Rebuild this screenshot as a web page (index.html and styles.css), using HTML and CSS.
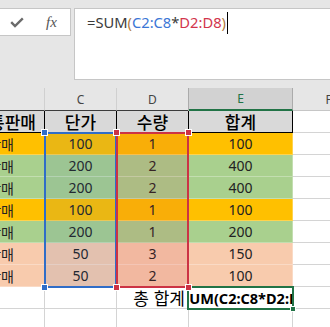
FILE: index.html
```html
<!DOCTYPE html>
<html lang="ko">
<head>
  <meta charset="UTF-8">
  <meta name="viewport" content="width=device-width, initial-scale=1.0">
  <title>총 합계</title>
  <link rel="stylesheet" href="styles.css">
</head>
<body>
  <div class="formula-bar">
    <div class="fx-box">
      <svg class="check" width="14" height="11" viewBox="0 0 14 11">
        <polyline points="1.2,5.2 5,9 12.8,1.4" fill="none" stroke="#6b6b6b" stroke-width="2.4"/>
      </svg>
      <span class="fx">fx</span>
    </div>
    <div class="formula-input">
      <span>=SUM</span><span class="paren">(</span><span class="ref-c">C2:C8</span><span>*</span><span class="ref-d">D2:D8</span><span class="paren">)</span><span class="caret"></span>
    </div>
  </div>

  <div class="sheet">
    <!-- column letters -->
    <div class="col-head"></div>
    <div class="col-head">C</div>
    <div class="col-head">D</div>
    <div class="col-head selected">E</div>
    <div class="col-head last">F</div>

    <!-- table header -->
    <div class="row head">
      <div class="name">유통판매</div>
      <div>단가</div>
      <div>수량</div>
      <div>합계</div>
      <div></div>
    </div>

    <div class="row gold">
      <div class="name">직접판매</div><div>100</div><div>1</div><div>100</div><div></div>
    </div>
    <div class="row green">
      <div class="name">위탁판매</div><div>200</div><div>2</div><div>400</div><div></div>
    </div>
    <div class="row green">
      <div class="name">위탁판매</div><div>200</div><div>2</div><div>400</div><div></div>
    </div>
    <div class="row gold">
      <div class="name">직접판매</div><div>100</div><div>1</div><div>100</div><div></div>
    </div>
    <div class="row green">
      <div class="name">위탁판매</div><div>200</div><div>1</div><div>200</div><div></div>
    </div>
    <div class="row peach">
      <div class="name">대리판매</div><div>50</div><div>3</div><div>150</div><div></div>
    </div>
    <div class="row peach">
      <div class="name">대리판매</div><div>50</div><div>2</div><div>100</div><div></div>
    </div>

    <div class="row total">
      <div></div>
      <div></div>
      <div class="sum-label">총 합계</div>
      <div class="active">
        <span class="edit">=SUM(C2:C8*D2:D8)</span>
        <i class="fill"></i>
      </div>
      <div></div>
    </div>

    <div class="row total">
      <div></div><div></div><div></div><div></div><div></div>
    </div>

    <!-- formula reference ranges -->
    <div class="range range-c">
      <i class="h tl"></i><i class="h tr"></i><i class="h bl"></i><i class="h br"></i>
    </div>
    <div class="range range-d">
      <i class="h tl"></i><i class="h tr"></i><i class="h bl"></i><i class="h br"></i>
    </div>
  </div>
</body>
</html>
```

FILE: styles.css
```css
html, body {
  margin: 0;
  padding: 0;
  height: 100%;
  overflow: hidden;
}

body {
  background-color: #e6e6e6;
  font-family: "Noto Sans", "Noto Sans CJK KR", sans-serif;
  color: #222;
}

.formula-bar {
  display: flex;
  gap: 3px;
  padding-top: 8px;
  height: 72px;
}

.fx-box {
  display: flex;
  align-items: center;
  box-sizing: border-box;
  width: 71px;
  height: 28px;
  padding-left: 10px;
  background-color: #fff;
  border: 1px solid #c6c6c6;
  border-left: none;
}

.check {
  margin-top: 1px;
}

.fx {
  margin-left: 22px;
  font-family: "Liberation Serif", serif;
  font-style: italic;
  font-size: 15px;
  color: #555;
}

.formula-input {
  flex: 1;
  box-sizing: border-box;
  height: 72px;
  padding: 3px 12px;
  background-color: #fff;
  border: 1px solid #c6c6c6;
  border-right: none;
  font-size: 14.7px;
  line-height: 20px;
  color: #3a3a3a;
  white-space: nowrap;
}

.paren {
  color: #b07a40;
}

.ref-c {
  color: #3b76d6;
}

.ref-d {
  color: #d2354c;
}

.caret {
  display: inline-block;
  width: 1px;
  height: 22px;
  margin-left: 1px;
  vertical-align: -6px;
  background-color: #000;
}

.sheet {
  position: relative;
  display: grid;
  grid-template-columns: 45px 72px 72px 104px 72px;
  grid-template-rows: 23px repeat(10, 22px);
  margin-top: 8px;
  background-color: #fff;
}

.col-head {
  display: flex;
  align-items: center;
  justify-content: center;
  box-sizing: border-box;
  background-color: #e6e6e6;
  border-right: 1px solid #d0d0d0;
  border-bottom: 1px solid #3c3c3c;
  font-size: 12px;
  color: #444;
}

.col-head.selected {
  background-color: #d2d2d2;
  color: #217346;
  border-right-color: #ababab;
  border-bottom: 2px solid #217346;
  box-shadow: -1px 0 0 #ababab;
}

.col-head.last {
  border-bottom-color: #c6c6c6;
}

.row {
  display: contents;
}

.row > div {
  display: flex;
  align-items: center;
  justify-content: center;
  box-sizing: border-box;
  border-right: 1px solid rgba(255, 255, 255, 0.3);
  border-bottom: 1px solid rgba(255, 255, 255, 0.3);
  font-size: 14px;
  white-space: nowrap;
}

.row > div:last-child {
  background-color: #fff;
  border-right: 1px solid #d4d4d4;
  border-bottom: 1px solid #d4d4d4;
}

.head > div {
  background-color: #d9d9d9;
  border-right: 1px solid #000;
  border-bottom: 1px solid #000;
  font-family: "Noto Sans CJK KR", sans-serif;
  font-size: 17px;
  font-weight: 500;
  color: #000;
}

.gold > div { background-color: #ffc000; }
.green > div { background-color: #a9d08e; }
.peach > div { background-color: #f8cbad; }

.name {
  font-family: "Noto Sans CJK KR", sans-serif;
  font-size: 15px;
}

.row > .name {
  justify-content: flex-end;
  padding-right: 30px;
}

.head > .name {
  padding-right: 8px;
  font-size: 17px;
}

.total > div {
  background-color: #fff;
  border-right: 1px solid #d4d4d4;
  border-bottom: 1px solid #d4d4d4;
}

.row > .sum-label {
  justify-content: flex-end;
  padding-right: 4px;
  border-right: none;
  font-family: "Noto Sans CJK KR", sans-serif;
  font-size: 17px;
  color: #000;
}

.row > .active {
  position: relative;
  justify-content: flex-start;
  margin: -1px -1px -1px -2px;
  border: 2px solid #217346;
  font-size: 14.5px;
  font-weight: 700;
  color: #000;
}

.edit {
  flex: 1;
  overflow: hidden;
  text-indent: -16px;
}

.fill {
  position: absolute;
  right: -4px;
  bottom: -4px;
  width: 6px;
  height: 6px;
  box-sizing: border-box;
  background-color: #217346;
  border: 1px solid #fff;
}

.range {
  position: absolute;
  grid-row: 3 / 10;
  inset: -1px 0 -1px -1px;
  z-index: 1;
  border: 2px solid;
}

.range-c {
  grid-column: 2 / 3;
  border-color: #2f6dc8;
  background-color: rgba(47, 109, 200, 0.1);
}

.range-d {
  grid-column: 3 / 4;
  border-color: #cc3345;
  background-color: rgba(204, 51, 69, 0.12);
}

.h {
  position: absolute;
  width: 7px;
  height: 7px;
  box-sizing: border-box;
  border: 1px solid #fff;
}

.range-c .h { background-color: #2f6dc8; }
.range-d .h { background-color: #cc3345; }

.tl { left: -5px; top: -5px; }
.tr { right: -5px; top: -5px; }
.bl { left: -5px; bottom: -5px; }
.br { right: -5px; bottom: -5px; }
```
